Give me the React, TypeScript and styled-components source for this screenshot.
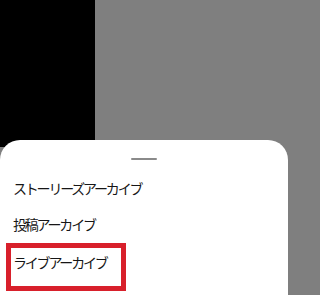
import React from 'react';
import styled, { createGlobalStyle } from 'styled-components';

const GlobalStyle = createGlobalStyle`
  html, body {
    margin: 0;
    padding: 0;
    width: 288px;
    height: 295px;
    overflow: hidden;
    background: #7f7f7f;
    font-family: 'Noto Sans CJK JP', 'Noto Sans', sans-serif;
  }
`;

const items = ['ストーリーズアーカイブ', '投稿アーカイブ'];

const App = () => {
  return (
    <St.Screen>
      <GlobalStyle />
      <St.Backdrop>
        <St.DarkPanel />
      </St.Backdrop>
      <St.Sheet>
        <St.Handle />
        <St.List>
          {items.map((label) => (
            <St.Item key={label}>{label}</St.Item>
          ))}
          <St.Highlight>
            <St.ItemText>ライブアーカイブ</St.ItemText>
          </St.Highlight>
        </St.List>
      </St.Sheet>
    </St.Screen>
  );
};

const St = {
  Screen: styled.div`
    position: relative;
    width: 288px;
    height: 295px;
    overflow: hidden;
    background: #7f7f7f;
  `,

  Backdrop: styled.div`
    display: flex;
    width: 100%;
    height: 100%;
  `,

  DarkPanel: styled.div`
    width: 95px;
    height: 147px;
    background: #000;
  `,

  // bottom sheet lies over the dimmed page
  Sheet: styled.div`
    position: absolute;
    left: 0;
    right: 0;
    top: 140px;
    bottom: 0;
    display: flex;
    flex-direction: column;
    align-items: stretch;
    padding-top: 18px;
    background: #fff;
    border-radius: 20px 20px 0 0;
  `,

  Handle: styled.div`
    align-self: center;
    width: 26px;
    height: 2px;
    border-radius: 1px;
    background: #8a8a8a;
  `,

  List: styled.div`
    display: flex;
    flex-direction: column;
    margin-top: 10px;
  `,

  Item: styled.div`
    display: flex;
    align-items: center;
    height: 36px;
    padding-left: 13px;
    font-size: 14px;
    letter-spacing: -2.2px;
    color: #161616;
  `,

  Highlight: styled.div`
    display: flex;
    align-items: flex-start;
    box-sizing: border-box;
    width: 120px;
    height: 48px;
    margin: 1px 0 0 6px;
    border: 5px solid #d8202b;
  `,

  ItemText: styled.span`
    padding-left: 2px;
    line-height: 28px;
    font-size: 14px;
    letter-spacing: -2.2px;
    color: #161616;
  `,
};

export default App;
